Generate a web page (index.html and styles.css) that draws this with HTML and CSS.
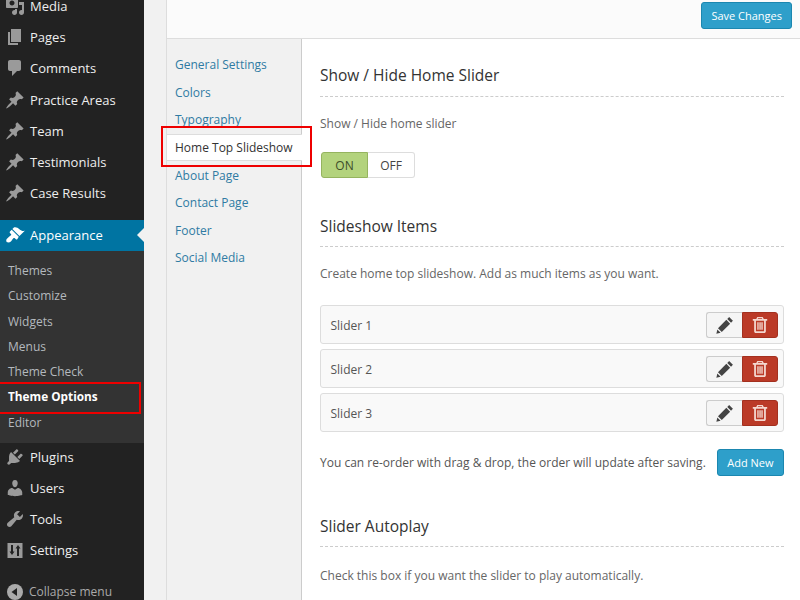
FILE: index.html
```html
<!DOCTYPE html>
<html lang="en">
<head>
<meta charset="utf-8">
<title>Theme Options</title>
<link rel="stylesheet" href="styles.css">
</head>
<body>
<svg class="defs" width="0" height="0" aria-hidden="true">
  <symbol id="pin" viewBox="0 0 20 20"><path d="M10.44 3.02l1.82-1.82 6.36 6.35-1.83 1.82c-1.05-.68-2.48-.57-3.41.36l-.75.75c-.92.93-1.04 2.35-.35 3.41l-1.83 1.82-2.41-2.41-2.8 2.79c-.42.42-3.38 2.71-3.8 2.29s1.86-3.39 2.28-3.81l2.79-2.79L4.1 9.36l1.83-1.82c1.05.69 2.48.57 3.4-.36l.75-.75c.93-.92 1.05-2.35.36-3.41z"/></symbol>
  <symbol id="pencil" viewBox="0 0 20 20"><path d="M14.6 1.2l4.2 4.2-2.1 2.100-4.200-4.200zM11.500 4.300l4.200 4.200-9.300 9.300-4.200-4.200zM1.500 14.900l3.600 3.600-4.700 1.100z"/></symbol>
  <symbol id="trash" viewBox="0 0 20 20"><path fill-rule="evenodd" d="M7 1h6l1.200 2.200H18v2h-1.500v11.800c0 1.100-.8 2-1.800 2H5.300c-1 0-1.800-.9-1.800-2V5.200H2v-2h3.800zM8 2.600l-.5.600h5l-.5-.6zM5.500 5.200v11.800h9V5.200zM7 7h1.500v8.200H7zM9.300 7h1.500v8.200H9.300zM11.500 7H13v8.200h-1.500z"/></symbol>
</svg>
<div class="page">
  <nav class="sidebar">
    <ul class="menu menu-top">
      <li class="item"><svg class="ico" viewBox="0 0 20 20"><path d="M13 11V4c0-.55-.45-1-1-1h-1.670L9 1H5L3.670 3H2c-.55 0-1 .45-1 1v7c0 .55.45 1 1 1h10c.55 0 1-.45 1-1zM7 4.500c1.380 0 2.500 1.120 2.500 2.500S8.380 9.500 7 9.500 4.500 8.380 4.500 7 5.620 4.500 7 4.500zM14 6h5v10.500c0 1.380-1.120 2.500-2.500 2.500S14 17.880 14 16.500s1.120-2.500 2.500-2.500c.17 0 .34.020.5.050V9h-3V6zm-4 8.050V13h2v3.500c0 1.380-1.120 2.500-2.500 2.500S7 17.880 7 16.500 8.120 14 9.500 14c.17 0 .34.020.5.050z"/></svg><span>Media</span></li>
      <li class="item"><svg class="ico" viewBox="0 0 20 20"><path d="M6 15V2h10v13H6zm-1 1h8v2H3V5h2v11z"/></svg><span>Pages</span></li>
      <li class="item"><svg class="ico" viewBox="0 0 20 20"><path d="M5 2h9c1.100 0 2 .9 2 2v7c0 1.100-.9 2-2 2h-2l-5 5v-5H5c-1.100 0-2-.9-2-2V4c0-1.100.9-2 2-2z"/></svg><span>Comments</span></li>
      <li class="item"><svg class="ico"><use href="#pin"/></svg><span>Practice Areas</span></li>
      <li class="item"><svg class="ico"><use href="#pin"/></svg><span>Team</span></li>
      <li class="item"><svg class="ico"><use href="#pin"/></svg><span>Testimonials</span></li>
      <li class="item"><svg class="ico"><use href="#pin"/></svg><span>Case Results</span></li>
    </ul>
    <div class="current"><svg class="ico" viewBox="0 0 20 20"><path d="M14.480 11.060L7.410 3.990l1.500-1.500c.5-.56 2.300-.47 3.510.32 1.210.8 1.430 1.280 2.910 2.100 1.180.64 2.450 1.260 4.450.85zm-.71.71L6.700 4.700 4.930 6.470c-.39.39-.39 1.020 0 1.410l1.060 1.060c.39.39.39 1.030 0 1.420-.6.6-1.430 1.110-2.210 1.690-.35.26-.7.53-1.010.84C1.430 13.710.96 15.120 1.370 16.260c.05.13.13.25.19.37.07.11.15.21.25.3.09.1.19.18.3.25.12.06.24.14.37.19 1.140.41 2.550-.06 3.370-.88.31-.31.58-.66.84-1.010.58-.78 1.090-1.610 1.690-2.210.39-.39 1.030-.39 1.420 0l1.060 1.060c.39.39 1.020.39 1.410 0z"/></svg><span>Appearance</span></div>
    <ul class="sub">
      <li>Themes</li>
      <li>Customize</li>
      <li>Widgets</li>
      <li>Menus</li>
      <li>Theme Check</li>
      <li class="sub-on">Theme Options</li>
      <li>Editor</li>
    </ul>
    <ul class="menu menu-bottom">
      <li class="item"><svg class="ico" viewBox="0 0 20 20"><path d="M13.110 4.360L9.870 7.600 8 5.730l3.240-3.240c.35-.34 1.050-.2 1.560.32.52.51.66 1.210.31 1.550zm-8 1.770l.91-1.120 9.010 9.010-1.190.84c-.71.71-2.630 1.160-3.820 1.160H6.140L4.900 17.260c-.59.59-1.540.59-2.120 0-.59-.58-.59-1.530 0-2.120l1.240-1.240v-3.880c0-1.130.4-3.190 1.090-3.890zm7.260 3.970l3.240-3.240c.34-.35 1.040-.21 1.550.31.52.51.66 1.210.31 1.550l-3.240 3.250z"/></svg><span>Plugins</span></li>
      <li class="item"><svg class="ico" viewBox="0 0 20 20"><path d="M10 9.250c-2.270 0-2.730-3.440-2.730-3.440C7 4.020 7.820 2 9.970 2c2.160 0 2.980 2.020 2.710 3.810 0 0-.41 3.440-2.680 3.440zm0 2.570L12.720 10c2.390 0 4.520 2.330 4.520 4.530v2.490s-3.650 1.130-7.240 1.130c-3.650 0-7.240-1.130-7.240-1.130v-2.490c0-2.250 1.940-4.480 4.470-4.480z"/></svg><span>Users</span></li>
      <li class="item"><svg class="ico" viewBox="0 0 20 20"><path d="M16.680 9.770c-1.340 1.340-3.300 1.670-4.950.99l-5.410 6.520c-.99.99-2.590.99-3.580 0s-.99-2.590 0-3.570l6.520-5.420c-.68-1.650-.35-3.610.99-4.950 1.280-1.280 3.120-1.620 4.720-1.060l-2.890 2.890 2.820 2.820 2.860-2.870c.53 1.580.18 3.390-1.080 4.650z"/></svg><span>Tools</span></li>
      <li class="item"><svg class="ico" viewBox="0 0 20 20"><path fill-rule="evenodd" d="M2.500 3h15v15h-15zM6 5v6.500H4.500L7 15l2.500-3.500H8V5zM13 5l-2.500 3.500H12V16h2V8.500h1.500z"/></svg><span>Settings</span></li>
    </ul>
    <div class="collapse"><svg class="ico-round" viewBox="0 0 20 20"><circle cx="10" cy="10" r="8"/><path class="notch" d="M12 6v8l-5.500-4z"/></svg><span>Collapse menu</span></div>
  </nav>
  <main class="panel">
    <header class="bar"><button class="btn">Save Changes</button></header>
    <div class="columns">
      <ul class="tabs">
        <li>General Settings</li>
        <li>Colors</li>
        <li>Typography</li>
        <li class="tab-on">Home Top Slideshow</li>
        <li>About Page</li>
        <li>Contact Page</li>
        <li>Footer</li>
        <li>Social Media</li>
      </ul>
      <section class="content">
        <h2>Show / Hide Home Slider</h2>
        <p class="p-first">Show / Hide home slider</p>
        <div class="toggle"><span class="on">ON</span><span class="off">OFF</span></div>
        <h2 class="h-items">Slideshow Items</h2>
        <p class="p-first">Create home top slideshow. Add as much items as you want.</p>
        <div class="rows">
          <div class="row"><span class="label">Slider 1</span><div class="acts"><span class="edit"><svg class="a-ico"><use href="#pencil"/></svg></span><span class="del"><svg class="a-ico"><use href="#trash"/></svg></span></div></div>
          <div class="row"><span class="label">Slider 2</span><div class="acts"><span class="edit"><svg class="a-ico"><use href="#pencil"/></svg></span><span class="del"><svg class="a-ico"><use href="#trash"/></svg></span></div></div>
          <div class="row"><span class="label">Slider 3</span><div class="acts"><span class="edit"><svg class="a-ico"><use href="#pencil"/></svg></span><span class="del"><svg class="a-ico"><use href="#trash"/></svg></span></div></div>
        </div>
        <div class="reorder"><p>You can re-order with drag &amp; drop, the order will update after saving.</p><button class="btn btn-add">Add New</button></div>
        <h2 class="h-auto">Slider Autoplay</h2>
        <p class="p-auto">Check this box if you want the slider to play automatically.</p>
      </section>
    </div>
  </main>
</div>
<div class="mark mark-a"></div>
<div class="mark mark-b"></div>
</body>
</html>
```
FILE: styles.css
```css
* { box-sizing: border-box; }
html, body { margin: 0; padding: 0; height: 600px; overflow: hidden; }
body { font-family: "Open Sans", sans-serif; font-size: 13px; color: #555; background: #f1f1f1; position: relative; }
ul { list-style: none; margin: 0; padding: 0; }
p { margin: 0; }
.defs { position: absolute; }
.page { display: flex; height: 600px; }

.sidebar { width: 144px; flex: none; background: #222; height: 600px; color: #eee; font-size: 13px; overflow: hidden; }
.menu-top { margin-top: -9.6px; }
.item { height: 31.2px; display: flex; align-items: center; padding-left: 5px; gap: 5px; }
.ico { width: 20px; height: 20px; fill: #9a9a9a; flex: none; }
.current { margin-top: 11.2px; height: 31px; background: #0074a2; color: #fff; display: flex; align-items: center; padding-left: 5px; gap: 5px; position: relative; }
.current .ico { fill: #fff; }
.current::after { content: ""; position: absolute; right: 0; top: 8px; border: 7.5px solid transparent; border-right-color: #f1f1f1; border-left: 0; }
.sub { background: #333; padding: 7px 0 8px; height: 192px; font-size: 12px; color: #b4b9be; }
.sub li { height: 25.3px; line-height: 25.3px; padding-left: 8px; }
.sub .sub-on { color: #fff; font-weight: 700; font-size: 11.8px; }
.menu-bottom { margin-top: -1.6px; }
.collapse { margin-top: 10.5px; height: 30px; display: flex; align-items: center; padding-left: 5px; gap: 4px; color: #aaa; font-size: 12px; }
.ico-round { width: 20px; height: 20px; fill: #aaa; flex: none; }
.notch { fill: #222; }

.panel { margin-left: 22px; flex: 1; min-width: 0; background: #fff; display: flex; flex-direction: column; height: 600px; border-left: 1px solid #ddd; }
.bar { height: 39px; flex: none; background: #fbfbfb; border-bottom: 1px solid #ddd; display: flex; justify-content: flex-end; padding: 2px 8px 0 0; align-items: flex-start; }
.btn { font-family: inherit; font-size: 11px; color: #fff; background: #2e9fca; border: 1px solid #1b87b0; border-radius: 3px; height: 27px; padding: 0 9px; margin: 0; }
.btn-add { padding: 0 9.5px; }
.columns { display: flex; flex: 1; min-height: 0; }
.tabs { width: 135px; flex: none; background: #f1f1f1; border-right: 1px solid #ccc; padding-top: 12px; font-size: 12px; color: #2f7ba3; }
.tabs li { height: 27.5px; line-height: 27.5px; padding-left: 8px; }
.tabs .tab-on { background: #fff; color: #333; height: 27px; line-height: 26px; width: 135px; margin-bottom: 1px; border-top: 1px solid #ddd; border-bottom: 1px solid #ddd; }
.content { flex: 1; padding: 0 16px 0 18px; min-width: 0; font-size: 12px; }
h2 { margin: 0; font-weight: 400; font-size: 15.5px; color: #333; height: 58px; padding-top: 24px; line-height: 24px; border-bottom: 1px dashed #ccc; }
.p-first { margin-top: 18px; line-height: 18px; color: #666; }
.p-auto { margin-top: 20px; line-height: 18px; color: #666; }
.toggle { display: flex; width: 94px; height: 26px; margin: 19px 0 0 1px; border-radius: 3px; }
.toggle span { display: flex; align-items: center; justify-content: center; }
.on { width: 47px; background: #b3d37d; border: 1px solid #95b45f; border-radius: 3px 0 0 3px; color: #3d4d2a; }
.off { flex: 1; background: #fff; border: 1px solid #ddd; border-left: 0; border-radius: 0 3px 3px 0; color: #444; }
.h-items { margin-top: 24px; height: 45px; padding-top: 12px; }
.rows { margin-top: 22px; display: flex; flex-direction: column; gap: 5px; }
.row { height: 39px; background: #f9f9f9; border: 1px solid #ddd; border-radius: 3px; display: flex; align-items: center; justify-content: space-between; padding: 0 5px 0 9.5px; color: #555; }
.label { padding-top: 1px; }
.acts { display: flex; }
.edit, .del { width: 36px; height: 26px; display: flex; align-items: center; justify-content: center; }
.edit { background: #f5f5f5; border: 1px solid #ccc; border-right: 0; border-radius: 3px 0 0 3px; }
.del { background: #bb3a27; border: 1px solid #a3301f; border-radius: 0 3px 3px 0; }
.a-ico { width: 18px; height: 18px; }
.edit .a-ico { fill: #444; }
.del .a-ico { fill: #f4d7cf; }
.reorder { margin-top: 17px; display: flex; align-items: center; justify-content: space-between; }
.h-auto { margin-top: 25px; height: 46px; padding-top: 13px; }
.mark { position: absolute; border: 2px solid #ee0000; }
.mark-a { left: -4px; top: 382px; width: 145px; height: 32px; }
.mark-b { left: 161px; top: 126px; width: 151px; height: 41px; }
```
